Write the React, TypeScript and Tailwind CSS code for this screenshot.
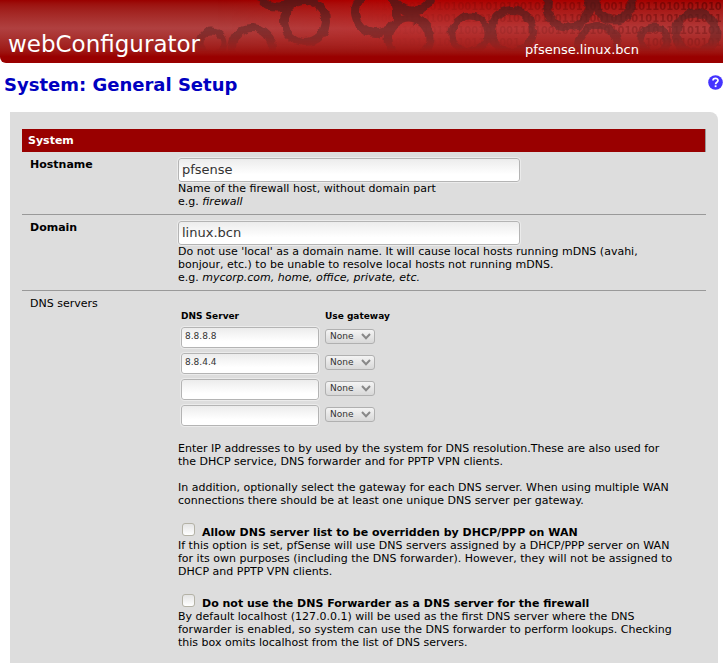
import React, { useState } from 'react';

// cx, cy, radius of the middle of the ring, thickness
const GEARS = [
  [212, 43, 12, 7],
  [252, 48, 20, 8],
  [277, -11, 18, 9],
  [305, 21, 21, 8],
  [376, 12, 21, 8],
  [409, 39, 21, 9],
  [412, -10, 21, 9],
  [470, 34, 18, 7],
  [512, 31, 21, 8],
  [568, 6, 21, 9],
  [614, 2, 18, 9],
  [598, 46, 20, 8],
  [654, 40, 13, 7],
  [696, 33, 20, 9],
];

// the last line leaves room for the host name
const BITS = [
  { x: 360, y: 10, text: '0011010011010100110101001011010110100101011010101010' },
  { x: 360, y: 22, text: '1010010110100101101001010011011010010100101101001011' },
  { x: 360, y: 34, text: '0101101001011010010100110100101101001010010111101101' },
  { x: 360, y: 46, text: '11010010110100101101001' },
  { x: 645, y: 46, text: '10010100101' },
];

const FIELD_BOX =
  'block border border-[#b4b4b4] rounded-[3px] bg-linear-to-b from-[#ececec] to-white to-70% text-[#333] outline-1 outline-[#ebebeb]';

const CHECK_BOX =
  'mr-[7px] mb-[3px] ml-1 size-[13px] appearance-none rounded-[3px] border border-[#b4b2a6] bg-linear-to-b from-[#e4e4e4] to-white checked:bg-[#900]';

const BannerArt = () => (
  <svg className="absolute top-0 left-0" width="723" height="63" viewBox="0 0 723 63" aria-hidden="true">
    <defs>
      <linearGradient id="fadeY" x1="0" y1="0" x2="0" y2="1">
        <stop offset="0" stopColor="#fff" />
        <stop offset="0.35" stopColor="#aaa" />
        <stop offset="0.6" stopColor="#777" />
        <stop offset="0.82" stopColor="#000" />
      </linearGradient>
      <linearGradient id="fadeX" gradientUnits="userSpaceOnUse" x1="360" y1="0" x2="723" y2="0">
        <stop offset="0" stopColor="#500000" stopOpacity="0" />
        <stop offset="0.5" stopColor="#500000" stopOpacity="0.3" />
        <stop offset="1" stopColor="#500000" stopOpacity="0.6" />
      </linearGradient>
      <linearGradient id="glow" x1="0" y1="0" x2="1" y2="0">
        <stop offset="0.3" stopColor="#e00000" stopOpacity="0" />
        <stop offset="0.55" stopColor="#e00000" stopOpacity="0.35" />
        <stop offset="1" stopColor="#c00000" stopOpacity="0.2" />
      </linearGradient>
      <mask id="fade">
        <rect width="723" height="63" fill="url(#fadeY)" />
      </mask>
      <filter id="rough" x="0" y="0" width="723" height="63" filterUnits="userSpaceOnUse">
        <feTurbulence type="fractalNoise" baseFrequency="0.12" numOctaves="2" seed="4" />
        <feDisplacementMap in="SourceGraphic" scale="6" xChannelSelector="R" yChannelSelector="G" />
      </filter>
    </defs>
    <g mask="url(#fade)">
      <rect width="723" height="63" fill="url(#glow)" />
      <g fill="url(#fadeX)" fontFamily="DejaVu Sans" fontWeight="700" fontSize="10">
        {BITS.map((row) => (
          <text key={`${row.x}-${row.y}`} x={row.x} y={row.y}>
            {row.text}
          </text>
        ))}
      </g>
      <g filter="url(#rough)" opacity="0.7" fill="none" stroke="#401c1c">
        {GEARS.map(([cx, cy, r, w]) => (
          <circle key={cx} cx={cx} cy={cy} r={r} strokeWidth={w} />
        ))}
      </g>
    </g>
  </svg>
);

interface SetupRowProps {
  label: React.ReactNode;
  last?: boolean;
  children: React.ReactNode;
}

const SetupRow: React.FC<SetupRowProps> = ({ label, last, children }) => (
  <div className={`flex px-2 py-1.5 ${last ? '' : 'border-b border-[#999]'}`}>
    <div className="w-37 shrink-0">{label}</div>
    <div className="min-w-0 flex-1 pr-5">{children}</div>
  </div>
);

const App: React.FC = () => {
  const [hostname, setHostname] = useState('pfsense');
  const [domain, setDomain] = useState('linux.bcn');
  const [servers, setServers] = useState(['8.8.8.8', '8.8.4.4', '', '']);

  const updateServer = (index: number, value: string) => {
    setServers(servers.map((s, i) => (i === index ? value : s)));
  };

  return (
    <div className="flex min-h-screen flex-col bg-white font-['DejaVu_Sans',sans-serif] text-[11px] leading-[13px] text-black">
      <header className="relative overflow-hidden rounded-bl-md bg-linear-to-b from-[#900] via-[#b04040] via-45% to-[#900] to-90% text-white">
        <BannerArt />
        <div className="relative flex h-[63px] items-end justify-between pr-[84px] pb-1 pl-2">
          <span className="text-[23px] leading-[30px]">webConfigurator</span>
          <span className="text-[13px] leading-[18px]">pfsense.linux.bcn</span>
        </div>
      </header>

      <div className="flex items-start justify-between pt-3 pl-1">
        <h1 className="text-lg leading-5 font-bold text-[#0000c0]">System: General Setup</h1>
        <a href="#help" aria-label="Help">
          <svg width="15" height="15" viewBox="0 0 15 15">
            <circle cx="7.5" cy="7.5" r="7.3" fill="#4433ff" />
            <path d="M5 5.6C5 2.6 10 2.6 10 5.5C10 7.3 7.6 7.2 7.6 9.2" fill="none" stroke="#fff" strokeWidth="1.7" />
            <rect x="6.7" y="10.3" width="1.8" height="1.8" fill="#fff" />
          </svg>
        </a>
      </div>

      <main className="mt-[17px] mr-[5px] ml-2.5 flex-1 rounded-tr-lg bg-[#ddd] px-3 pt-[17px]">
        <h2 className="border-r border-[#999] bg-[#900] px-1.5 py-[5px] font-bold text-white">System</h2>

        <SetupRow label={<label htmlFor="hostname" className="font-bold">Hostname</label>}>
          <input
            id="hostname"
            value={hostname}
            onChange={(e) => setHostname(e.target.value)}
            className={`${FIELD_BOX} h-6 w-full max-w-[342px] px-[3px] pb-0.5 text-[13px]`}
          />
          <p>Name of the firewall host, without domain part</p>
          <p>e.g. <em>firewall</em></p>
        </SetupRow>

        <SetupRow label={<label htmlFor="domain" className="font-bold">Domain</label>}>
          <input
            id="domain"
            value={domain}
            onChange={(e) => setDomain(e.target.value)}
            className={`${FIELD_BOX} h-6 w-full max-w-[342px] px-[3px] pb-0.5 text-[13px]`}
          />
          <p>
            Do not use 'local' as a domain name. It will cause local hosts running mDNS (avahi,
            bonjour, etc.) to be unable to resolve local hosts not running mDNS.
          </p>
          <p>e.g. <em>mycorp.com, home, office, private, etc.</em></p>
        </SetupRow>

        <SetupRow label="DNS servers" last>
          <table className="mt-[11px] mb-3.5 ml-[3px] text-[9px]">
            <thead>
              <tr className="h-4 text-left align-middle">
                <th className="w-36 p-0">DNS Server</th>
                <th className="p-0">Use gateway</th>
              </tr>
            </thead>
            <tbody>
              {servers.map((server, i) => (
                <tr key={i} className="h-[26px]">
                  <td className="p-0">
                    <input
                      aria-label={`DNS server ${i + 1}`}
                      value={server}
                      onChange={(e) => updateServer(i, e.target.value)}
                      className={`${FIELD_BOX} h-[21px] w-[138px] px-[3px] pb-0.5`}
                    />
                  </td>
                  <td className="p-0 pb-0.5">
                    <div className="relative w-[50px]">
                      <select
                        aria-label={`Gateway for DNS server ${i + 1}`}
                        className="block h-[15px] w-full appearance-none rounded-[3px] border border-[#b0b0b0] bg-linear-to-b from-[#f4f4f4] to-[#d8d8d8] pl-1 text-[9px] leading-3 text-[#333]"
                      >
                        <option>None</option>
                      </select>
                      <svg className="pointer-events-none absolute top-1 right-1" width="10" height="7" viewBox="0 0 10 7">
                        <path d="M1 1L5 5.2L9 1" fill="none" stroke="#888" strokeWidth="2" />
                      </svg>
                    </div>
                  </td>
                </tr>
              ))}
            </tbody>
          </table>

          <p>
            Enter IP addresses to by used by the system for DNS resolution.These are also used for
            the DHCP service, DNS forwarder and for PPTP VPN clients.
          </p>
          <p className="mt-[13px]">
            In addition, optionally select the gateway for each DNS server. When using multiple WAN
            connections there should be at least one unique DNS server per gateway.
          </p>

          <div className="mt-4">
            <label className="flex items-end font-bold">
              <input type="checkbox" className={CHECK_BOX} />
              Allow DNS server list to be overridden by DHCP/PPP on WAN
            </label>
            <p>
              If this option is set, pfSense will use DNS servers assigned by a DHCP/PPP server on WAN
              for its own purposes (including the DNS forwarder). However, they will not be assigned to
              DHCP and PPTP VPN clients.
            </p>
          </div>

          <div className="mt-4">
            <label className="flex items-end font-bold">
              <input type="checkbox" className={CHECK_BOX} />
              Do not use the DNS Forwarder as a DNS server for the firewall
            </label>
            <p>
              By default localhost (127.0.0.1) will be used as the first DNS server where the DNS
              forwarder is enabled, so system can use the DNS forwarder to perform lookups. Checking
              this box omits localhost from the list of DNS servers.
            </p>
          </div>
        </SetupRow>
      </main>
    </div>
  );
};

export default App;
